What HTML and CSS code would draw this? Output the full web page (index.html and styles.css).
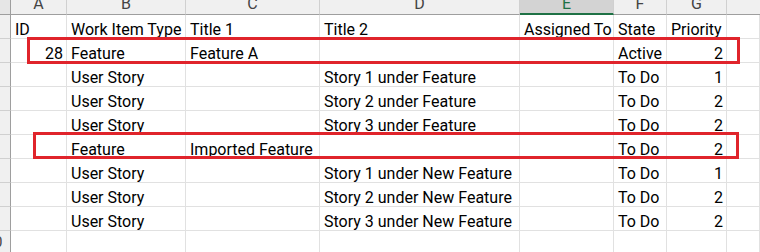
FILE: index.html
```html
<!DOCTYPE html>
<html>
<head>
<meta charset="utf-8">
<link rel="stylesheet" href="styles.css">
</head>
<body>
<div class="sheet">
  <div class="grid">
    <div class="corner"></div>
    <div class="ch">A</div>
    <div class="ch">B</div>
    <div class="ch">C</div>
    <div class="ch">D</div>
    <div class="ch sel">E</div>
    <div class="ch">F</div>
    <div class="ch">G</div>
    <div class="ch last"></div>

    <div class="rh"><span>1</span></div>
    <div class="c">ID</div><div class="c">Work Item Type</div><div class="c">Title 1</div><div class="c">Title 2</div><div class="c">Assigned To</div><div class="c">State</div><div class="c">Priority</div><div class="c"></div>

    <div class="rh"><span>2</span></div>
    <div class="c r">28</div><div class="c">Feature</div><div class="c">Feature A</div><div class="c"></div><div class="c"></div><div class="c">Active</div><div class="c r">2</div><div class="c"></div>

    <div class="rh"><span>3</span></div>
    <div class="c"></div><div class="c">User Story</div><div class="c"></div><div class="c">Story 1 under Feature</div><div class="c"></div><div class="c">To Do</div><div class="c r">1</div><div class="c"></div>

    <div class="rh"><span>4</span></div>
    <div class="c"></div><div class="c">User Story</div><div class="c"></div><div class="c">Story 2 under Feature</div><div class="c"></div><div class="c">To Do</div><div class="c r">2</div><div class="c"></div>

    <div class="rh"><span>5</span></div>
    <div class="c"></div><div class="c">User Story</div><div class="c"></div><div class="c">Story 3 under Feature</div><div class="c"></div><div class="c">To Do</div><div class="c r">2</div><div class="c"></div>

    <div class="rh"><span>6</span></div>
    <div class="c"></div><div class="c">Feature</div><div class="c">Imported Feature</div><div class="c"></div><div class="c"></div><div class="c">To Do</div><div class="c r">2</div><div class="c"></div>

    <div class="rh"><span>7</span></div>
    <div class="c"></div><div class="c">User Story</div><div class="c"></div><div class="c">Story 1 under New Feature</div><div class="c"></div><div class="c">To Do</div><div class="c r">1</div><div class="c"></div>

    <div class="rh"><span>8</span></div>
    <div class="c"></div><div class="c">User Story</div><div class="c"></div><div class="c">Story 2 under New Feature</div><div class="c"></div><div class="c">To Do</div><div class="c r">2</div><div class="c"></div>

    <div class="rh"><span>9</span></div>
    <div class="c"></div><div class="c">User Story</div><div class="c"></div><div class="c">Story 3 under New Feature</div><div class="c"></div><div class="c">To Do</div><div class="c r">2</div><div class="c"></div>

    <div class="rh"><span>10</span></div>
    <div class="c"></div><div class="c"></div><div class="c"></div><div class="c"></div><div class="c"></div><div class="c"></div><div class="c"></div><div class="c"></div>
  </div>
  <div class="hl hl1"></div>
  <div class="hl hl2"></div>
</div>
</body>
</html>
```
FILE: styles.css
```css
html, body {
  margin: 0;
  padding: 0;
  background: #ffffff;
  overflow: hidden;
}
.sheet {
  position: relative;
  width: 760px;
  height: 252px;
  overflow: hidden;
}
.grid {
  display: grid;
  grid-template-columns: 11px 56px 119px 134px 200px 94px 53px 60px 1fr;
  grid-template-rows: 15px repeat(10, 24px);
  font-family: Roboto, "Liberation Sans", sans-serif;
  font-size: 16px;
  color: #000;
}
.corner {
  background: #e6e6e6;
  border-right: 1px solid #9e9e9e;
  border-bottom: 1px solid #9e9e9e;
}
.ch {
  background: #f0f0f0;
  border-right: 1px solid #d0d0d0;
  border-bottom: 1px solid #9e9e9e;
  color: #444;
  text-align: center;
  font-size: 16px;
  line-height: 14px;
  display: flex;
  align-items: flex-end;
  justify-content: center;
  overflow: hidden;
  padding-bottom: 3px;
  box-sizing: border-box;
}
.ch.sel {
  background: #d3d3d3;
  color: #1e7145;
  border-bottom: 2px solid #1e7145;
  padding-bottom: 2px;
}
.ch.last {
  border-right: none;
}
.rh {
  background: #f0f0f0;
  border-right: 1px solid #9e9e9e;
  border-bottom: 1px solid #d0d0d0;
  overflow: hidden;
  position: relative;
}
.rh span {
  display: block;
  width: 30px;
  margin-left: -21px;
  text-align: center;
  color: #444;
  font-size: 15px;
  line-height: 23px;
}
.c {
  border-right: 1px solid #e1e1e1;
  border-bottom: 1px solid #e1e1e1;
  padding: 0 4px;
  line-height: 30px;
  height: 23px;
  white-space: nowrap;
  overflow: visible;
}
.c.r {
  text-align: right;
  padding-right: 3px;
}
.hl {
  position: absolute;
  border: 3px solid #e0242b;
  box-sizing: border-box;
  pointer-events: none;
}
.hl1 {
  left: 27px;
  top: 37px;
  width: 713px;
  height: 27px;
}
.hl2 {
  left: 33px;
  top: 132px;
  width: 706px;
  height: 27px;
}
```
